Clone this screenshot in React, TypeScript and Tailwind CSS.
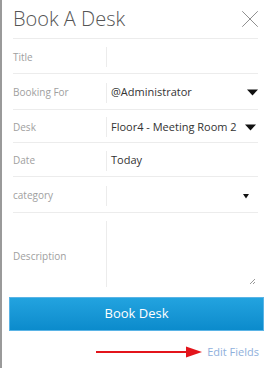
import { X } from "lucide-react";

const font = { fontFamily: '"Open Sans", "Segoe UI", sans-serif' };

function Caret({ small = false }: { small?: boolean }) {
  return small ? (
    <svg width="6" height="6" viewBox="0 0 6 6" className="shrink-0">
      <path d="M0 1 L6 1 L3 5.5 Z" fill="#111" />
    </svg>
  ) : (
    <svg width="11" height="7" viewBox="0 0 11 7" className="shrink-0">
      <path d="M0 0.5 L11 0.5 L5.5 6.5 Z" fill="#111" />
    </svg>
  );
}

function Row({
  label,
  children,
  h = "h-[35px]",
}: {
  label: string;
  children?: React.ReactNode;
  h?: string;
}) {
  return (
    <div className={`flex items-center border-b border-[#ececec] pt-[2px] ${h}`}>
      <div className="w-[93px] shrink-0 text-[10px] text-[#a0a0a0]">{label}</div>
      <div className="flex h-[20px] min-w-0 flex-1 items-center border-l border-[#ececec] pl-[4px]">
        {children}
      </div>
    </div>
  );
}

export default function App() {
  return (
    <div
      className="h-[368px] w-[271px] border-l-2 border-[#9a9a9a] bg-white"
      style={font}
    >
      <div className="px-[11px] pr-[13px]">
        <div className="flex h-[39px] items-center justify-between border-b border-[#ececec]">
          <span className="text-[20px] font-light leading-none text-[#555]">
            Book A Desk
          </span>
          <X size={30} strokeWidth={0.75} className="mr-[-7px] text-[#888]" />
        </div>
        <Row label="Title" />
        <Row label="Booking For" h="h-[36px]">
          <span className="flex-1 text-[11px] text-[#333]">@Administrator</span>
          <Caret />
        </Row>
        <Row label="Desk" h="h-[33px]">
          <span className="flex-1 whitespace-nowrap text-[11px] text-[#333]">
            Floor4 - Meeting Room 2
          </span>
          <span className="mr-[2px]">
            <Caret />
          </span>
        </Row>
        <Row label="Date" h="h-[34px]">
          <span className="text-[11px] text-[#333]">Today</span>
        </Row>
        <Row label="category" h="h-[36px]">
          <span className="flex-1" />
          <span className="mr-[9px]">
            <Caret small />
          </span>
        </Row>
        <div className="flex h-[76px] items-center">
          <div className="w-[93px] shrink-0 pt-[10px] text-[10px] text-[#a0a0a0]">
            Description
          </div>
          <div className="relative mt-[8px] h-[66px] flex-1 self-start border-l border-[#ececec]">
            <svg
              width="7"
              height="7"
              viewBox="0 0 7 7"
              className="absolute bottom-[2px] right-[2px]"
            >
              <path d="M1 6 L6 1 M4 6 L6 4" stroke="#999" strokeWidth="1" />
            </svg>
          </div>
        </div>
      </div>
      <div className="mx-[7px] mt-[8px]">
        <button className="flex h-[34px] w-full items-center justify-center border border-[#5ab4e6] bg-gradient-to-b from-[#22a3df] to-[#0b8bcc] text-[13px] text-white">
          Book Desk
        </button>
      </div>
      <div className="mt-[13px] flex items-center justify-end pr-[12px]">
        <svg width="106" height="12" viewBox="0 0 106 12" className="mr-[5px]">
          <line x1="0" y1="6" x2="94" y2="6" stroke="#e3141b" strokeWidth="2" />
          <path d="M90 0.5 L106 6 L90 11.5 Z" fill="#e3141b" />
        </svg>
        <span className="text-[11px] text-[#8fb0dc]">Edit Fields</span>
      </div>
    </div>
  );
}
